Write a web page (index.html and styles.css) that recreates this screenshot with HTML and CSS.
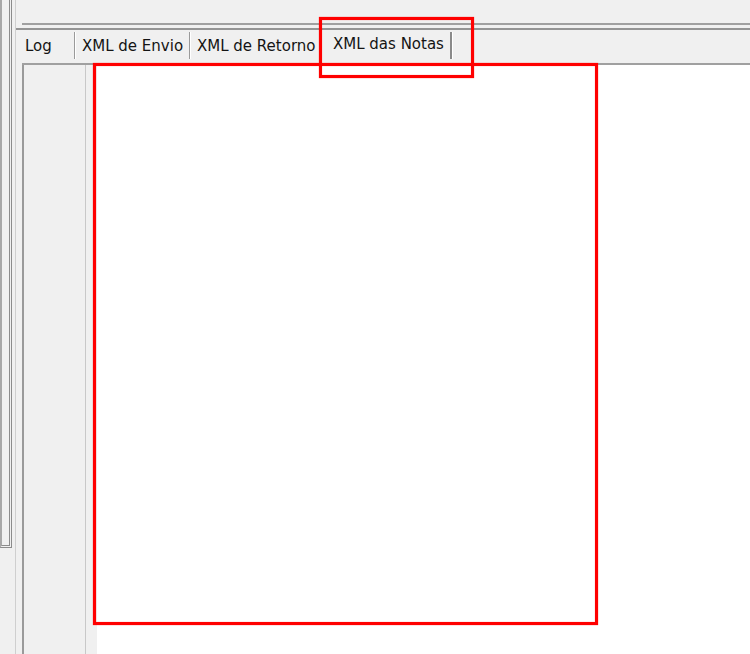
FILE: index.html
```html
<!DOCTYPE html>
<html lang="pt">
<head>
  <meta charset="UTF-8">
  <title>XML das Notas</title>
  <link rel="stylesheet" href="styles.css">
</head>
<body>
  <div class="window">
    <div class="side"></div>
    <div class="main">
      <div class="toolbar"></div>
      <div class="tab-control">
        <div class="tab-strip">
          <div class="tab tab-log">Log</div>
          <div class="tab tab-envio">XML de Envio</div>
          <div class="tab tab-retorno">XML de Retorno</div>
          <div class="tab tab-notas active">XML das Notas</div>
        </div>
        <div class="tab-page">
          <div class="gutter"></div>
          <div class="gutter-pad"></div>
          <div class="editor"></div>
        </div>
      </div>
    </div>
  </div>

  <!-- highlight boxes -->
  <div class="mark mark-tab"></div>
  <div class="mark mark-page"></div>
</body>
</html>
```

FILE: styles.css
```css
body {
  margin: 0;
  padding: 0;
  background-color: #f0f0f0;
  font-family: "DejaVu Sans", "Liberation Sans", sans-serif;
  width: 750px;
  height: 654px;
  overflow: hidden;
  position: relative;
}

.window {
  display: flex;
  height: 654px;
}

.side {
  width: 7px;
  height: 545px;
  border-right: 3px double #8c8c8c;
  border-bottom: 3px double #8c8c8c;
  border-left: 2px solid #a8a8a8;
  flex-shrink: 0;
}

.main {
  flex: 1;
  display: flex;
  flex-direction: column;
  margin-left: 3px;
  border-left: 1px solid #cfcfcf;
}

.toolbar {
  height: 23px;
  border-bottom: 2px solid #a0a0a0;
  margin-left: 6px;
  flex-shrink: 0;
}

.tab-control {
  flex: 1;
  display: flex;
  flex-direction: column;
  margin-top: 3px;
  border-top: 2px solid #949494;
  padding-left: 6px;
}

.tab-strip {
  display: flex;
  height: 31px;
  border-bottom: 2px solid #a0a0a0;
  padding-top: 2px;
}

.tab {
  font-size: 15px;
  color: #141414;
  height: 27px;
  line-height: 29px;
  border-right: 1px solid #9a9a9a;
  box-shadow: 1px 0 0 #ffffff;
  white-space: nowrap;
  overflow: hidden;
}

.tab-log {
  width: 49px;
  padding-left: 3px;
}

.tab-envio {
  width: 107px;
  padding-left: 7px;
}

.tab-retorno {
  width: 123px;
  padding-left: 7px;
  border-right: none;
  box-shadow: none;
}

/* selected tab sits a little higher */
.tab-notas {
  width: 117px;
  padding-left: 10px;
  margin-left: 3px;
  line-height: 25px;
  border-right: 2px solid #8a8a8a;
}

.tab-page {
  flex: 1;
  display: flex;
  border-left: 2px solid #9a9a9a;
}

.gutter {
  width: 61px;
  border-right: 1px solid #c8c8c8;
  background-color: #f0f0f0;
}

.gutter-pad {
  width: 11px;
  background-color: #f0f0f0;
}

.editor {
  flex: 1;
  background-color: #ffffff;
}

.mark {
  position: absolute;
  border: 3px solid #ff0000;
  box-shadow: 0 0 1px rgba(255, 0, 0, 0.7), inset 0 0 1px rgba(255, 0, 0, 0.7);
  box-sizing: border-box;
}

.mark-tab {
  left: 319px;
  top: 17px;
  width: 155px;
  height: 61px;
}

.mark-page {
  left: 93px;
  top: 63px;
  width: 505px;
  height: 562px;
}
```
